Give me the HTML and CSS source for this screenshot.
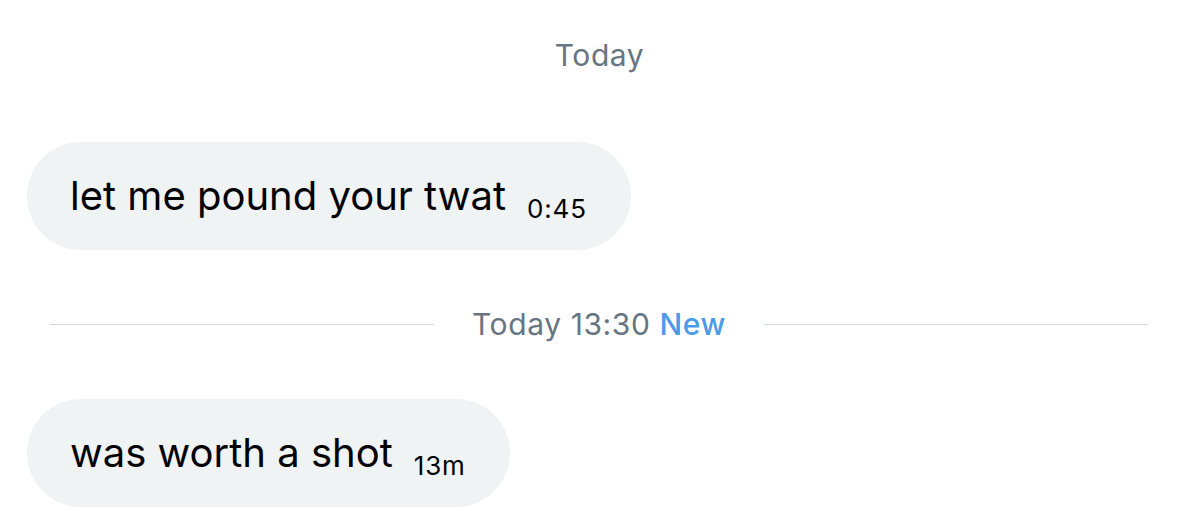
FILE: index.html
```html
<!DOCTYPE html>
<html>
<head>
<meta charset="utf-8">
<link rel="stylesheet" href="styles.css">
</head>
<body>
<div class="chat">
  <div class="day">Today</div>
  <div class="row row-first">
    <div class="bubble">
      <span class="msg">let me pound your twat</span>
      <span class="time">0:45</span>
    </div>
  </div>
  <div class="sep">
    <div class="line"></div>
    <div class="sep-text">Today 13:30 <span class="new">New</span></div>
    <div class="line"></div>
  </div>
  <div class="row row-second">
    <div class="bubble">
      <span class="msg">was worth a shot</span>
      <span class="time">13m</span>
    </div>
  </div>
</div>
</body>
</html>
```
FILE: styles.css
```css
html, body {
  margin: 0;
  padding: 0;
  background: #ffffff;
}
.chat {
  width: 1199px;
  height: 527px;
  display: flex;
  flex-direction: column;
  font-family: Inter, "Liberation Sans", sans-serif;
  overflow: hidden;
}
.day {
  margin-top: 35px;
  height: 40px;
  line-height: 40px;
  text-align: center;
  font-size: 30px;
  letter-spacing: 0.6px;
  color: #677482;
}
.row {
  display: flex;
  padding-left: 27px;
}
.row-first {
  margin-top: 67px;
}
.row-second {
  margin-top: 49px;
}
.bubble {
  height: 108px;
  box-sizing: border-box;
  background: #eff3f4;
  border-radius: 54px;
  display: flex;
  align-items: center;
  padding: 0 44px 0 43px;
  gap: 21px;
}
.msg {
  font-size: 40px;
  color: #000000;
  line-height: 48px;
}
.time {
  font-size: 26px;
  letter-spacing: 0.8px;
  color: #000000;
  margin-top: 24px;
}
.sep {
  display: flex;
  align-items: center;
  margin: 48px 51px 0 50px;
  height: 52px;
  gap: 38px;
}
.line {
  flex: 1;
  height: 1px;
  background: #cfd9de;
}
.sep-text {
  font-size: 30px;
  letter-spacing: 0.6px;
  color: #677482;
  white-space: nowrap;
}
.new {
  color: #4a9be8;
  font-weight: 500;
}
```
